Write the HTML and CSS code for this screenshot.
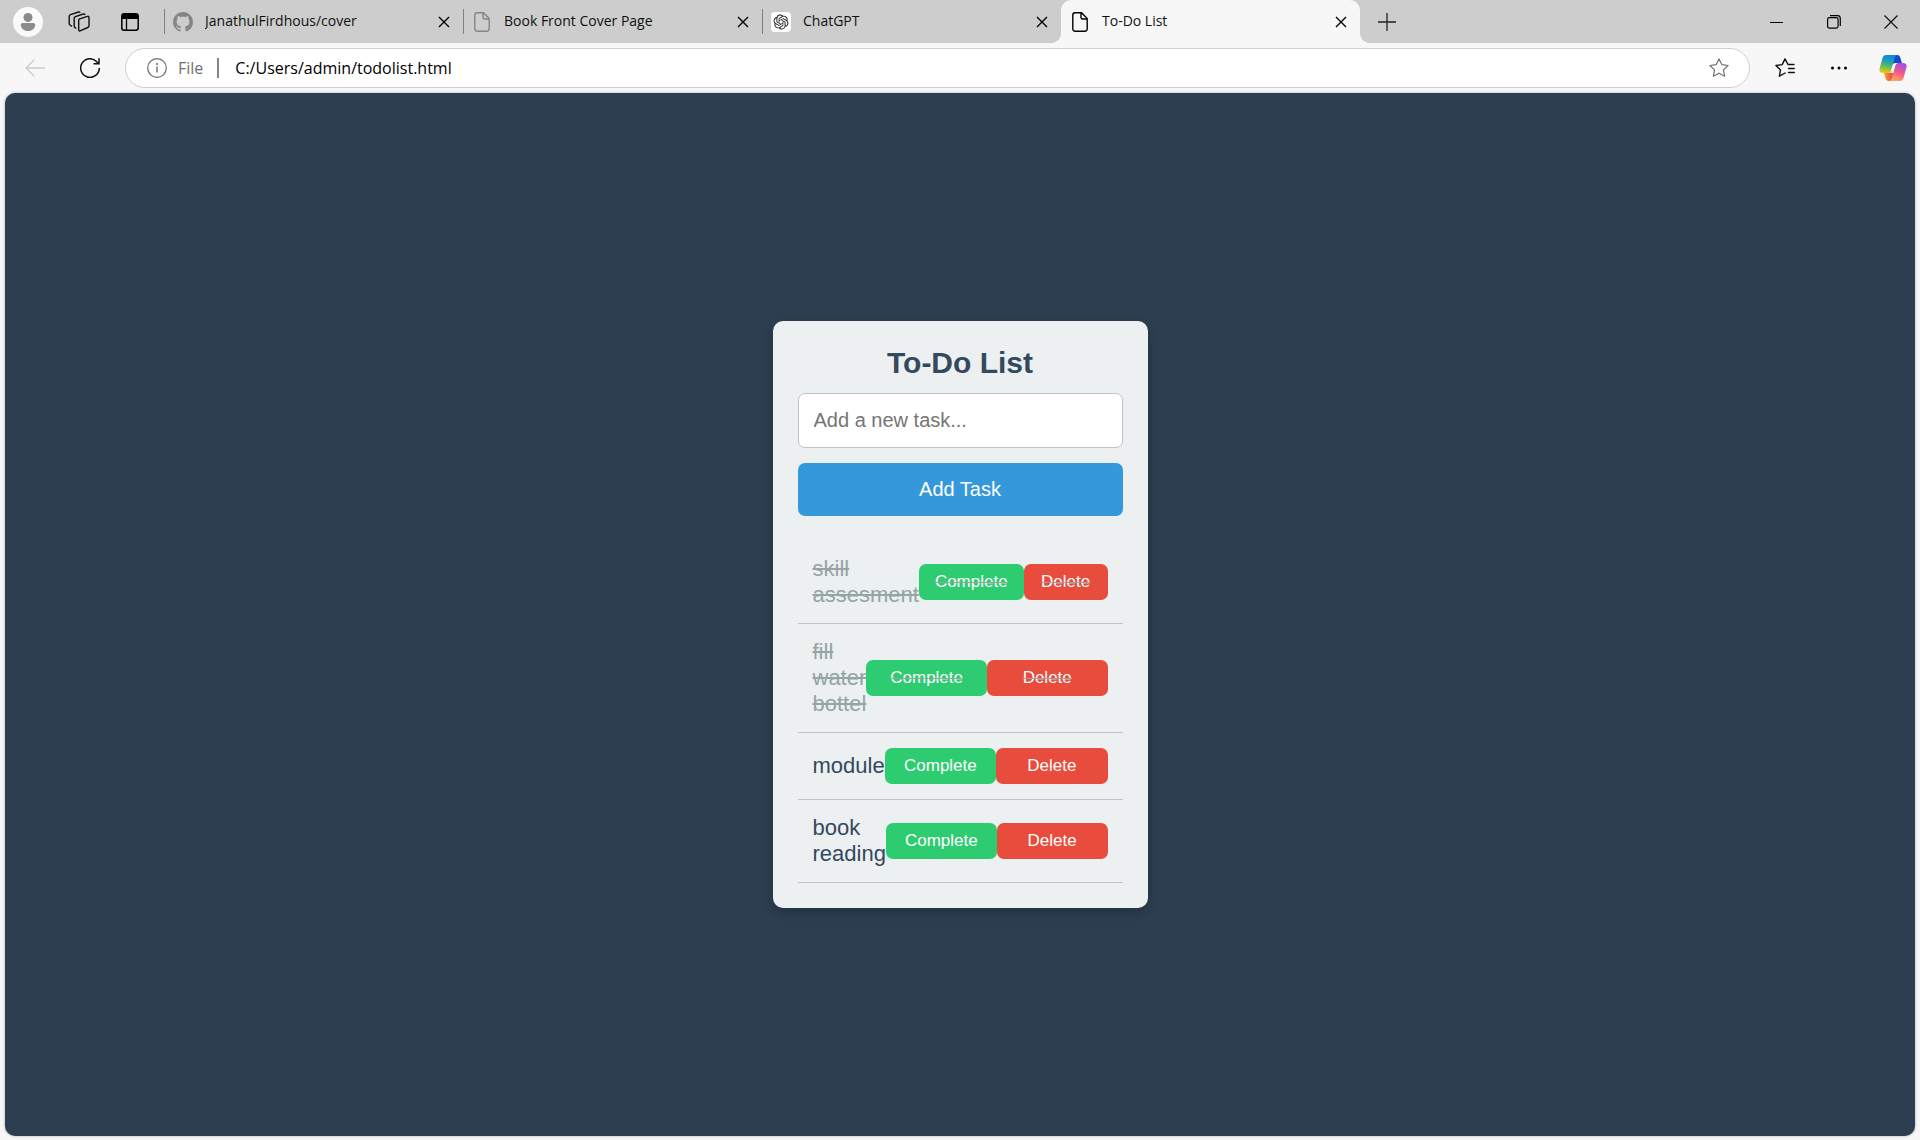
FILE: index.html
```html
<!DOCTYPE html>
<html lang="en">
<head>
<meta charset="utf-8">
<meta name="viewport" content="width=device-width, initial-scale=1">
<title>To-Do List</title>
<link rel="stylesheet" href="styles.css">
</head>
<body>
<svg class="defs" width="0" height="0" aria-hidden="true">
  <symbol id="close" viewBox="0 0 12 12"><path d="M1 1l10 10M11 1L1 11" fill="none" stroke="currentColor" stroke-width="1.4"/></symbol>
  <symbol id="file" viewBox="0 0 16 20"><path d="M3 .8h6.500L15.200 6.500V17a2.200 2.200 0 0 1-2.200 2.200H3A2.200 2.200 0 0 1 .8 17V3A2.200 2.200 0 0 1 3 .8zM9 1v4.500A1.500 1.500 0 0 0 10.500 7H15" fill="none" stroke="currentColor" stroke-width="1.400"/></symbol>
</svg>
<header class="browser">
  <div class="tab-strip">
    <div class="tools">
      <button class="avatar" aria-label="Profile"><svg width="30" height="30" viewBox="0 0 30 30"><circle cx="15" cy="15" r="15" fill="#fafafa"/><circle cx="15" cy="10.500" r="4.500" fill="#8b8b8b"/><path d="M9.500 16h11a1.700 1.700 0 0 1 1.700 1.700c0 3.500-3 6.300-7.200 6.300s-7.200-2.800-7.200-6.300A1.700 1.700 0 0 1 9.500 16z" fill="#8b8b8b"/></svg></button>
      <button aria-label="Workspaces"><svg width="22" height="22" viewBox="0 0 22 22" fill="none" stroke="#111" stroke-width="1.400" stroke-linejoin="round"><path d="M11 8.200l8.500-2.800q1.500-.4 1.500 1.200v8.200q0 1.300-1.200 1.700l-7.200 3.200q-1.900.8-1.900-1.200V9.500q0-1 .3-1.300z"/><path d="M8.300 17.500L7 16.600q-.8-.5-.8-1.600V7.500q0-1.300 1.200-1.800L15.300 3q1.300-.4 1.800.9"/><path d="M4 15.500L2 14q-.8-.6-.8-1.600V5.500q0-1.400 1.200-1.900L10.500 1q1.200-.4 1.700.6"/></svg></button>
      <button aria-label="Tab actions"><svg width="18" height="18" viewBox="0 0 18 18"><rect x=".8" y=".8" width="16.400" height="16.400" rx="2.500" fill="none" stroke="#000" stroke-width="1.500"/><path d="M1 1h16v5H1z"/><path d="M5.500 5v12" stroke="#000" stroke-width="1.300"/></svg></button>
    </div>
    <nav class="tabs" aria-label="Open tabs">
      <div class="tab">
        <svg class="favicon" width="20" height="20" viewBox="0 0 16 16"><path fill="#858585" d="M8 0C3.580 0 0 3.580 0 8c0 3.540 2.290 6.530 5.470 7.590.4.070.55-.17.55-.38 0-.19-.01-.82-.01-1.490-2.010.37-2.530-.49-2.690-.94-.09-.23-.48-.94-.82-1.130-.28-.15-.68-.52-.01-.53.63-.01 1.080.58 1.230.82.72 1.210 1.870.87 2.330.66.070-.52.28-.87.51-1.070-1.780-.2-3.640-.89-3.640-3.950 0-.87.31-1.590.82-2.150-.08-.2-.36-1.020.08-2.120 0 0 .67-.21 2.200.82.64-.18 1.320-.27 2-.27s1.360.09 2 .27c1.530-1.040 2.200-.82 2.200-.82.44 1.100.16 1.920.08 2.120.51.56.82 1.270.82 2.150 0 3.070-1.870 3.750-3.650 3.950.29.25.54.73.54 1.480 0 1.070-.01 1.930-.01 2.200 0 .21.15.46.55.38A8.010 8.010 0 0 0 16 8c0-4.420-3.580-8-8-8z"/></svg>
        <a href="#cover">JanathulFirdhous/cover</a>
        <button aria-label="Close tab"><svg width="12" height="12"><use href="#close"/></svg></button>
      </div>
      <div class="tab">
        <svg class="favicon muted" width="20" height="20"><use href="#file"/></svg>
        <a href="#book">Book Front Cover Page</a>
        <button aria-label="Close tab"><svg width="12" height="12"><use href="#close"/></svg></button>
      </div>
      <div class="tab">
        <svg class="favicon" width="20" height="20" viewBox="0 0 32 32"><rect width="32" height="32" rx="6" fill="#fff"/><path transform="translate(4 4)" fill="#222" d="M22.2819 9.8211a5.9847 5.9847 0 0 0-.5157-4.9108 6.0462 6.0462 0 0 0-6.5098-2.9A6.0651 6.0651 0 0 0 4.9807 4.1818a5.9847 5.9847 0 0 0-3.9977 2.9 6.0462 6.0462 0 0 0 .7427 7.0966 5.98 5.98 0 0 0 .511 4.9107 6.051 6.051 0 0 0 6.5146 2.9001A5.9847 5.9847 0 0 0 13.2599 24a6.0557 6.0557 0 0 0 5.7718-4.2058 5.9894 5.9894 0 0 0 3.9977-2.9001 6.0557 6.0557 0 0 0-.7475-7.0729zm-9.022 12.6081a4.4755 4.4755 0 0 1-2.8764-1.0408l.1419-.0804 4.7783-2.7582a.7948.7948 0 0 0 .3927-.6813v-6.7369l2.02 1.1686a.071.071 0 0 1 .038.052v5.5826a4.504 4.504 0 0 1-4.4945 4.4944zm-9.6607-4.1254a4.4708 4.4708 0 0 1-.5346-3.0137l.142.0852 4.783 2.7582a.7712.7712 0 0 0 .7806 0l5.8428-3.3685v2.3324a.0804.0804 0 0 1-.0332.0615L9.74 19.9502a4.4992 4.4992 0 0 1-6.1408-1.6464zM2.3408 7.8956a4.485 4.485 0 0 1 2.3655-1.9728V11.6a.7664.7664 0 0 0 .3879.6765l5.8144 3.3543-2.0201 1.1685a.0757.0757 0 0 1-.071 0l-4.8303-2.7865A4.504 4.504 0 0 1 2.3408 7.872zm16.5963 3.8558L13.1038 8.364 15.1192 7.2a.0757.0757 0 0 1 .071 0l4.8303 2.7913a4.4944 4.4944 0 0 1-.6765 8.1042v-5.6772a.79.79 0 0 0-.407-.667zm2.0107-3.0231l-.142-.0852-4.7735-2.7818a.7759.7759 0 0 0-.7854 0L9.409 9.2297V6.8974a.0662.0662 0 0 1 .0284-.0615l4.8303-2.7866a4.4992 4.4992 0 0 1 6.6802 4.66zM8.3065 12.863l-2.02-1.1638a.0804.0804 0 0 1-.038-.0567V6.0742a4.4992 4.4992 0 0 1 7.3757-3.4537l-.142.0805L8.704 5.459a.7948.7948 0 0 0-.3927.6813zm1.0976-2.3654l2.602-1.4998 2.6069 1.4998v2.9994l-2.5974 1.4997-2.6067-1.4997Z"/></svg>
        <a href="#chat">ChatGPT</a>
        <button aria-label="Close tab"><svg width="12" height="12"><use href="#close"/></svg></button>
      </div>
      <div class="tab active">
        <svg class="favicon" width="20" height="20"><use href="#file"/></svg>
        <a href="#todo" aria-current="page">To-Do List</a>
        <button aria-label="Close tab"><svg width="12" height="12"><use href="#close"/></svg></button>
      </div>
    </nav>
    <button class="new-tab" aria-label="New tab"><svg width="18" height="18" viewBox="0 0 18 18"><path d="M9 0v18M0 9h18" stroke="#222" stroke-width="1.300"/></svg></button>
    <div class="window-controls">
      <button aria-label="Minimize"><svg width="14" height="14" viewBox="0 0 14 14"><path d="M0 7.500h13" stroke="#000"/></svg></button>
      <button aria-label="Restore"><svg width="14" height="14" viewBox="0 0 14 14" fill="none" stroke="#000" stroke-width="1.200"><rect x=".6" y="2.600" width="10.500" height="10.500" rx="1.800"/><path d="M3 .7h7.500q2.800 0 2.800 2.800V11"/></svg></button>
      <button aria-label="Close"><svg width="14" height="14" viewBox="0 0 14 14"><path d="M.5.5l13 13M13.500.5l-13 13" stroke="#111" stroke-width="1.200"/></svg></button>
    </div>
  </div>
  <div class="toolbar">
    <div class="nav-buttons">
      <button aria-label="Back" disabled><svg width="20" height="18" viewBox="0 0 20 18"><path d="M9.500.5L1 9l8.500 8.500M1 9h19" fill="none" stroke="#ccc" stroke-width="1.300"/></svg></button>
      <button aria-label="Refresh"><svg width="20" height="20" viewBox="0 0 20 20"><path d="M19.300 10A9.300 9.300 0 1 1 16.800 3.700L18.500 5.500M19 .3v5.500h-5.500" fill="none" stroke="#111" stroke-width="1.500"/></svg></button>
    </div>
    <form class="address">
      <svg width="20" height="20" viewBox="0 0 20 20"><circle cx="10" cy="10" r="9.300" fill="none" stroke="#6b6b6b" stroke-width="1.200"/><path d="M10 8.500v6" stroke="#6b6b6b" stroke-width="1.400"/><circle cx="10" cy="6" r="1" fill="#6b6b6b"/></svg>
      <label for="url">File</label>
      <input id="url" type="text" value="C:/Users/admin/todolist.html">
      <button type="button" aria-label="Add to favorites"><svg width="20" height="20" viewBox="0 0 20 20"><path d="M10 .9l2.800 5.700 6.300.9-4.600 4.400 1.100 6.300L10 15.300l-5.600 2.900 1.100-6.300L.9 7.500l6.300-.9z" fill="none" stroke="#707070" stroke-width="1.200" stroke-linejoin="round"/></svg></button>
    </form>
    <div class="actions">
      <button aria-label="Favorites"><svg width="20" height="20" viewBox="0 0 20 20" fill="none" stroke="#111" stroke-width="1.400" stroke-linejoin="round" stroke-linecap="round"><path d="M19 6.500h-6L10 .9 7.200 6.600.9 7.500l4.600 4.400-1.100 6.300L10.200 15M13.500 10.500H19.300M13.500 14.500H19.300"/></svg></button>
      <button aria-label="Settings and more"><svg width="18" height="6" viewBox="0 0 18 6"><circle cx="2.500" cy="3" r="1.500"/><circle cx="9" cy="3" r="1.500"/><circle cx="15.500" cy="3" r="1.500"/></svg></button>
      <button aria-label="Copilot"><svg width="28" height="26" viewBox="0 0 28 26">
        <defs>
          <linearGradient id="cool" x1=".5" y1="0" x2=".3" y2="1"><stop offset=".1" stop-color="#1689e0"/><stop offset=".45" stop-color="#2dac94"/><stop offset=".75" stop-color="#8fc43b"/><stop offset="1" stop-color="#f5c711"/></linearGradient>
          <linearGradient id="warm" x1=".7" y1="0" x2=".4" y2="1"><stop offset="0" stop-color="#a04fe8"/><stop offset=".5" stop-color="#f0588f"/><stop offset="1" stop-color="#ffa35c"/></linearGradient>
          <linearGradient id="ember" x1="0" y1="0" x2="1" y2="0"><stop offset="0" stop-color="#f8a02c"/><stop offset="1" stop-color="#e8483f"/></linearGradient>
        </defs>
        <path d="M15 0h3.500q2 0 2.600 2l1.800 6H18q-2 0-2.700 2L14 8z" fill="#1749cf"/>
        <path d="M13 26H9.500q-2 0-2.600-2L5 18h4.500q2 0 2.700-2l2 2z" fill="url(#ember)"/>
        <path d="M7 0h11q-1.700.5-2.400 3L12 15.500Q11.200 18 9 18H4Q-.5 18 .6 13.500L3.500 3Q4.400 0 7 0z" fill="url(#cool)"/>
        <path d="M21 26H10.500q1.700-.5 2.400-3L16 10.500Q16.800 8 19 8h5q4.500 0 3.400 4.500L24.500 23q-.9 3-3.500 3z" fill="url(#warm)"/>
        <path d="M16 8h3q-2 .2-2.700 2.500L14.200 18H11q1.200-.3 1.800-2.500L14.300 10q.5-2 1.700-2z" fill="#f7f7f7"/>
      </svg></button>
    </div>
  </div>
</header>
<main class="page">
  <section class="card">
    <h1>To-Do List</h1>
    <input class="task-input" type="text" placeholder="Add a new task..." aria-label="New task">
    <button class="add">Add Task</button>
    <ul class="tasks">
      <li class="done"><span>skill assesment</span><button class="complete">Complete</button><button class="delete">Delete</button></li>
      <li class="done"><span>fill water bottel</span><button class="complete">Complete</button><button class="delete">Delete</button></li>
      <li><span>module</span><button class="complete">Complete</button><button class="delete">Delete</button></li>
      <li><span>book reading</span><button class="complete">Complete</button><button class="delete">Delete</button></li>
    </ul>
  </section>
</main>
</body>
</html>
```
FILE: styles.css
```css
* { box-sizing: border-box; }
body {
  margin: 0;
  min-height: 100vh;
  display: flex;
  flex-direction: column;
  background: #f7f7f7;
  font-family: "Open Sans", "Noto Sans", sans-serif;
}
button {
  margin: 0;
  padding: 0;
  border: 0;
  background: none;
  font: inherit;
  cursor: pointer;
}
svg { display: block; flex: none; }
.defs { position: absolute; }

/* Tab strip */
.tab-strip { display: flex; height: 43px; background: #cdcdcd; }
.tools {
  flex: none;
  width: 164px;
  padding: 0 8px 0 2px;
  display: grid;
  grid-template-columns: repeat(3, 1fr);
  align-items: center;
  justify-items: center;
}
.tabs { display: flex; flex: 0 1 1196px; min-width: 0; }
.tab {
  flex: 1 1 0;
  min-width: 0;
  display: flex;
  align-items: center;
  gap: 12px;
  padding: 0 13px 0 9px;
  font-size: 14px;
  position: relative;
}
.tab:not(.active)::before {
  content: "";
  position: absolute;
  left: 0;
  top: 9px;
  width: 1px;
  height: 25px;
  background: #808080;
}
.tab a {
  flex: 1;
  color: #111;
  text-decoration: none;
  white-space: nowrap;
  overflow: hidden;
  line-height: 24px;
  padding-bottom: 2px;
}
.muted { color: #858585; }
.tab.active { background: #f7f7f7; border-radius: 10px 10px 0 0; }
.tab.active::before,
.tab.active::after {
  content: "";
  position: absolute;
  bottom: 0;
  width: 10px;
  height: 10px;
}
.tab.active::before { right: 100%; background: radial-gradient(circle at 0 0, #cdcdcd 10px, #f7f7f7 10px); }
.tab.active::after { left: 100%; background: radial-gradient(circle at 100% 0, #cdcdcd 10px, #f7f7f7 10px); }
.new-tab { width: 54px; display: flex; align-items: center; justify-content: center; }
.window-controls { margin-left: auto; padding-right: 1px; display: flex; }
.window-controls button { width: 57px; display: flex; align-items: center; justify-content: center; }

/* Toolbar */
.toolbar { display: flex; align-items: center; height: 50px; }
.nav-buttons {
  flex: none;
  width: 125px;
  padding: 0 25px;
  display: flex;
  align-items: center;
  justify-content: space-between;
}
.address {
  flex: 1;
  height: 40px;
  display: flex;
  align-items: center;
  padding: 0 20px 0 21px;
  background: #fff;
  border: 1px solid #cfcfcf;
  border-radius: 20px;
  font-size: 16px;
}
.address label { margin-left: 11px; color: #707070; line-height: 24px; }
.address input {
  flex: 1;
  min-width: 0;
  height: 20px;
  margin-left: 14px;
  padding: 0 16px;
  border: 0;
  border-left: 2px solid #858585;
  outline: 0;
  background: none;
  color: #000;
  font: inherit;
}
.actions {
  flex: none;
  width: 170px;
  padding-left: 8px;
  display: grid;
  grid-template-columns: repeat(3, 1fr);
  align-items: center;
  justify-items: center;
}

/* Page */
.page {
  flex: 1;
  margin: 0 5px 4px;
  padding: 24px;
  display: flex;
  align-items: center;
  justify-content: center;
  background: #2c3e50;
  border-radius: 10px;
  box-shadow: 0 0 3px rgba(0, 0, 0, .3);
  font-family: "Liberation Sans", Arial, sans-serif;
}
.card {
  width: 375px;
  padding: 25px;
  background: #ecf0f1;
  border-radius: 10px;
  box-shadow: 0 5px 12px rgba(0, 0, 0, .2);
}
.card h1 {
  margin: 0 0 13px;
  color: #34495e;
  font-size: 30px;
  line-height: 34px;
  text-align: center;
}
.task-input {
  display: block;
  width: 100%;
  height: 55px;
  margin-bottom: 15px;
  padding: 0 15px;
  border: 1px solid #bdc3c7;
  border-radius: 7px;
  background: #fff;
  font: 20px "Liberation Sans", Arial, sans-serif;
}
.task-input::placeholder { color: #757575; }
.add {
  display: block;
  width: 100%;
  height: 53px;
  border-radius: 7px;
  background: #3498db;
  color: #fff;
  font-size: 20px;
}
.tasks { list-style: none; margin: 25px 0 0; padding: 0; }
.tasks li {
  display: flex;
  align-items: center;
  padding: 15px;
  border-bottom: 1px solid #bdc3c7;
  color: #34495e;
  font-size: 22px;
  line-height: 26px;
}
.tasks .done { color: #95a5a6; }
.done span { text-decoration: line-through; }
.tasks span { flex: 0 1 min-content; }
.tasks button {
  flex: 1 1 0;
  height: 36px;
  padding: 0 16px;
  border-radius: 7px;
  color: #fff;
  font-size: 17px;
}
.tasks .done button { text-decoration: line-through 1px #95a5a6; text-decoration-skip-ink: none; }
.complete { background: #2ecc71; }
.delete { background: #e74c3c; }
```
